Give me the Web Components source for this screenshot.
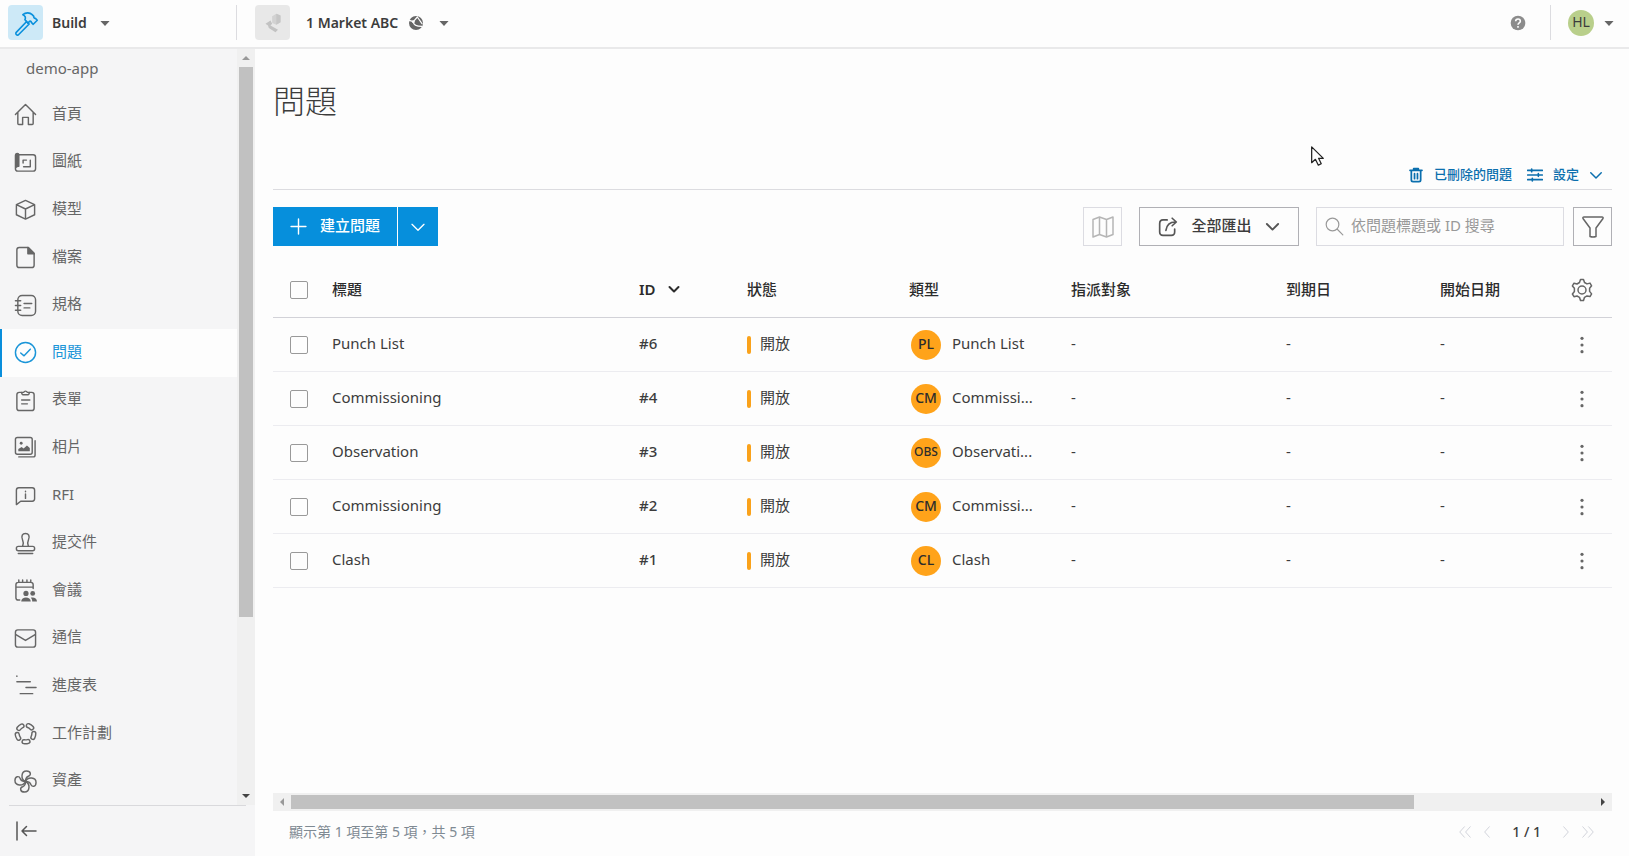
<!DOCTYPE html>
<html lang="zh-Hant">
<head>
<meta charset="utf-8">
<title>問題</title>
<style>
  html, body { height: 100%; }
  body {
    margin: 0;
    background: #fdfdfd;
    color: #3c3c3c;
    font-family: "Noto Sans", "Noto Sans CJK TC", sans-serif;
    font-size: 15px;
    line-height: 20px;
  }
</style>
</head>
<body>
<build-app></build-app>

<script>
const icons = {
  hammer: `<path d="M3 20.600 12.600 10.600l2.300 2.300L5.300 22.600a1.500 1.500 0 0 1-2.300-2z"/><path d="M12.400 10.500 11 9c1-1.900.4-3.700-1.900-4.700C11.800 2 15.600 2.200 17.700 4.300l1.500 1.600c-.2 1 .3 1.900 1.500 1.800l1.700 1.800-3.700 3.700-1.800-1.700c.1-1-.6-1.500-1.400-1.200l-1.900 1.900"/>`,
  caret: `<path d="M6.500 9.500h11L12 15.500z" fill="currentColor" stroke="none"/>`,
  project: `<path d="m11 4 5-3 5 2v8l-5 3-5-2z" fill="#d2d2d2" stroke="none"/><path d="m16 1 5 2v8l-5 3z" fill="#c6c6c6" stroke="none"/><path d="m3 13 6-4 2 4-2 2 9 5-3 3-8-5-1-3z" fill="#c2c2c2" stroke="none"/>`,
  globe: `<circle cx="12" cy="12" r="10.500" fill="currentColor" stroke="none"/><path d="m2 8 6 2 6-7M8 10c0 4 4 7 13 7M14 3l7 10" stroke="#fdfdfd" stroke-width="1.800"/><circle cx="8" cy="10" r="2.200" fill="#fdfdfd" stroke="none"/>`,
  help: `<circle cx="12" cy="12" r="11" fill="currentColor" stroke="none"/><path d="M8.500 9.500c0-4.800 7-4.500 7-.3 0 2.500-3.500 2.500-3.500 5.300M12 16.500v2.500" stroke="#fdfdfd" stroke-width="2.400" stroke-linecap="butt"/>`,
  home: `<path d="M1.500 12 12 1.500 22.500 12M4 10v11.500q0 1 1 1h4v-7.500h6v7.500h4q1 0 1-1V10"/>`,
  sheets: `<path d="M5 4h15q2.500 0 2.500 2.500v12q0 2.500-2.500 2.500H4q-2.500 0-2.500-2.500V5q0-2.500 2-2.500Q5 2.500 5 4v12q-2.500-.5-3.500 2"/><path d="M2 4h2.500v12H2z" fill="currentColor"/><path d="M9.500 12.500V9.500h3.500M17 9.500v7h-7"/>`,
  cube: `<path d="m12 2.500 9.500 4.500v10.500L12 22l-9.500-4.500V7zM2.500 7 12 11.500 21.500 7M12 11.500V22"/>`,
  file: `<path d="M5.500 1.500h9.500l6 6v12.500q0 2.500-2.500 2.500h-13Q3 22.500 3 20V4q0-2.500 2.500-2.500z"/><path d="M14.500 1.500 21 8h-6.500z" fill="currentColor"/>`,
  specs: `<rect x="4" y="1.500" width="18.500" height="21" rx="4.500"/><path d="M1.500 7H7M1.500 12H7M1.500 17H7M10.500 10h8M10.500 14.500h6"/>`,
  issue: `<circle cx="12" cy="12" r="10.500"/><path d="m7 12.500 3.500 3L17 8.500"/>`,
  form: `<path d="M8 3.500H5.500Q3 3.500 3 6v14q0 2.500 2.500 2.500h13Q21 22.500 21 20V6q0-2.500-2.500-2.500H16"/><path d="M8 3.500q0 2.500 1.500 2.500h5Q16 6 16 3.500h-2.200a1.900 1.900 0 0 0-3.600 0zM8 11.500h8.500M8 15.500h6"/>`,
  photo: `<rect x="1.500" y="1.500" width="17.500" height="17.500" rx="2"/><path d="M5 21.800h15q2 0 2-2V5"/><path d="M4.500 16v-2.500l3.500-2 2 1.500 3.500-3 3 2.500V16z" fill="currentColor" stroke="none"/><circle cx="7.500" cy="7.500" r="1.500" fill="currentColor" stroke="none"/>`,
  rfi: `<path d="M5 4h14q2.500 0 2.500 2.500v9q0 2.500-2.500 2.500H7l-4.500 3.500v-15Q2.500 4 5 4z"/><path d="M12 10.500v4.500M12 7.500v.5"/>`,
  stamp: `<path d="M9 15c1.500-3.500 1-4.500 0-6.500C7 4 9 1.500 12 1.500s5 2.500 3 7c-1 2-1.500 3 0 6.500"/><rect x="2.500" y="15" width="19" height="4.500" rx="2"/><path d="M4.500 22.500h15"/>`,
  meeting: `<path d="M6 22H4.500Q2 22 2 19.500V6q0-2.500 2.500-2.500h13Q20 3.500 20 6v4M2 8.500h18M5 1v2.500M9 1v2.500M13.500 1v2.500M17.500 1v2.500"/><g fill="currentColor" stroke="none"><circle cx="12.500" cy="15" r="2.700"/><circle cx="19.500" cy="15" r="2.500"/><path d="M7.500 23.500c0-5.500 10-5.500 10 0zM19 23.500c0-2-.5-3-1.500-4 3-1 6.500.5 6.500 4z"/></g>`,
  mail: `<rect x="1.500" y="3" width="21" height="18" rx="2.500"/><path d="m2 8 10 6 10-6"/>`,
  schedule: `<path d="M3 8h14M12.500 14H23M6.500 20.500h13M3 2v.500"/>`,
  plan: `<circle cx="12" cy="12" r="8.700" stroke-width="5.600" stroke-dasharray="4.200 6.730"/><circle cx="12" cy="12" r="8.700" stroke="#f5f5f6" stroke-width="2.600" stroke-dasharray="4.200 6.730"/>`,
  fan: [0, 90, 180, 270].map((turn) => `<path transform="rotate(${turn} 12 12)" d="M12 12C6.500 9.500 7.500 1 13 1c5 0 5 4.500 2 5.500-2.500 1-3 2.500-3 5.500"/>`).join(""),
  collapse: `<path d="M3 3v18M8 12h14M12.500 7.500 8 12l4.500 4.500"/>`,
  trash: `<path d="M3 5h18M8.500 5V2.500h7V5" stroke-width="2.600"/><path d="M5 6v13.500Q5 22 7.500 22h9q2.500 0 2.500-2.500V6M9.800 10v7.500M14.200 10v7.500" stroke-width="2.600"/>`,
  sliders: `<path d="M1 5h22M1 12h22M1 19h22M7 3v4M17 10v4M8 17v4" stroke-width="2.500"/>`,
  chevron: `<path d="m3 8 9 9 9-9"/>`,
  plus: `<path d="M12 1.500v21M1.500 12h21"/>`,
  map: `<path d="m2 4.500 6.500-2.500 7 2.500 6.500-2.500v17.500L15.500 22l-7-2.500L2 22zM8.500 2v17.500M15.500 4.500V22"/>`,
  share: `<path d="M11 3.500H6Q2 3.500 2 8v10q0 4 4 4h10q4 0 4-4v-3.500M17 1.500 22 6l-5 4.500M22 6c-7.500-.5-11.500 3-12.500 10"/>`,
  search: `<circle cx="9.500" cy="9.500" r="8"/><path d="m15.500 15.500 7 7"/>`,
  filter: `<path d="M2 3.500Q1.500 2 3 2h18q1.500 0 1 1.500L15 13v8.500q-3 1-6 0V13z"/>`,
  gear: `<path d="M9.500 4.500 10.500 1.500h3l1 3 2.500 1.400 3-.8 1.600 2.700-2 2.400v3.200l2 2.500-1.600 2.700-3-.7-2.500 1.400-1 3.200h-3l-1-3.200L7 18l-3 .7-1.600-2.700 2-2.500v-3.200l-2-2.400L4 5.200l3 .8z"/><circle cx="12" cy="12" r="4"/>`,
  dots: `<g fill="currentColor" stroke="none"><circle cx="12" cy="4" r="1.900"/><circle cx="12" cy="12" r="1.900"/><circle cx="12" cy="20" r="1.900"/></g>`,
  left: `<path d="m16 3-8 9 8 9"/>`,
  right: `<path d="m8 3 8 9-8 9"/>`,
  first: `<path d="m11 3-8 9 8 9M21 3l-8 9 8 9"/>`,
  last: `<path d="m3 3 8 9-8 9M13 3l8 9-8 9"/>`,
  arrow: `<path d="M2 1v19l4.500-4 3.500 7 3.500-1.700-3.200-6.500H16z" fill="#fdfdfd" stroke="#222"/>`,
};

// small helper: attach an open root and fill it from a template
function render(host, html) {
  const template = document.createElement("template");
  template.innerHTML = html;
  host.attachShadow({ mode: "open" }).appendChild(template.content.cloneNode(true));
}

const reset = `
  *, *::before { box-sizing: border-box; }
  button, input { font: inherit; color: inherit; margin: 0; }
  button { background: none; border: 0; padding: 0; display: flex; align-items: center; }
  a { color: inherit; text-decoration: none; }
`;

// <ui-icon name="" size="" weight="">
class UiIcon extends HTMLElement {
  connectedCallback() {
    if (this.shadowRoot) return;
    const size = this.getAttribute("size") || 24;
    const weight = this.getAttribute("weight") || 1.5;
    render(this, `
      <style>
        :host { display: block; flex: none; width: ${size}px; height: ${size}px; }
        svg { display: block; width: 100%; height: 100%; }
      </style>
      <svg viewBox="0 0 24 24" fill="none" stroke="currentColor" stroke-width="${weight}"
        stroke-linecap="round" stroke-linejoin="round" aria-hidden="true">${icons[this.getAttribute("name")]}</svg>`);
  }
}

class AppHeader extends HTMLElement {
  constructor() {
    super();
    render(this, `
      <style>
        ${reset}
        :host {
          display: flex;
          align-items: center;
          height: 49px;
          box-sizing: border-box;
          padding: 0 10px 2px 8px;
          border-bottom: 2px solid #e9e9ea;
          color: #3c3c3c;
        }
        button { gap: 8px; font-weight: 600; font-size: 14px; }
        ui-icon { color: #666; }
        .product { width: 228px; }
        .tile {
          display: flex;
          align-items: center;
          justify-content: center;
          width: 35px;
          height: 35px;
          margin-right: 1px;
          border-radius: 4px;
          background: #cde9f7;
        }
        .tile ui-icon { color: #0a90dc; }
        .gray { background: #e8e8e8; margin-right: 6px; }
        .rule { width: 1px; height: 35px; background: #dcdce0; }
        .project { margin-left: 18px; gap: 10px; }
        .help { margin-left: auto; margin-right: 24px; }
        .help ui-icon { color: #8c8c8c; }
        .user { margin-left: 17px; gap: 5px; font-weight: 400; }
        .avatar {
          width: 26px;
          height: 26px;
          line-height: 24px;
          border-radius: 50%;
          background: #b9cf8b;
          text-align: center;
        }
      </style>
      <button class="product">
        <span class="tile"><ui-icon name="hammer" size="26"></ui-icon></span>Build<ui-icon name="caret" size="20"></ui-icon>
      </button>
      <span class="rule"></span>
      <button class="project">
        <span class="tile gray"><ui-icon name="project" size="20"></ui-icon></span>1 Market ABC
        <ui-icon name="globe" size="16"></ui-icon><ui-icon name="caret" size="20"></ui-icon>
      </button>
      <button class="help" aria-label="說明"><ui-icon name="help" size="16"></ui-icon></button>
      <span class="rule"></span>
      <button class="user"><span class="avatar">HL</span><ui-icon name="caret" size="20"></ui-icon></button>`);
  }
}

class NavItem extends HTMLElement {
  connectedCallback() {
    if (this.shadowRoot) return;
    render(this, `
      <style>
        ${reset}
        :host { display: flex; flex: 1; color: #666; }
        a {
          display: flex;
          align-items: center;
          gap: 15px;
          flex: 1;
          padding-left: 12px;
          border-left: 2px solid transparent;
        }
        span { padding-bottom: 4px; }
        :host([active]) a { background: #fdfdfd; border-color: #0a8fdc; color: #1a95d8; }
      </style>
      <a href="#"><ui-icon name="${this.getAttribute("icon")}" size="23"></ui-icon><span><slot></slot></span></a>`);
  }
}

// Scroll rail: --thumb and --rest are the proportions of its two parts
class ScrollRail extends HTMLElement {
  constructor() {
    super();
    render(this, `
      <style>
        :host { display: flex; background: #f0f0f0; }
        span { display: flex; align-items: center; justify-content: center; flex: none; width: 18px; height: 18px; }
        svg { width: 10px; height: 10px; fill: #999; }
        .end svg { fill: #444; }
        .thumb { flex: var(--thumb); background: #c1c1c1; margin: 2px 0; }
        .rest { flex: var(--rest); }
        :host([vertical]) { flex-direction: column; }
        :host([vertical]) .thumb { margin: 0 2px; }
        :host([vertical]) svg { transform: rotate(90deg); }
      </style>
      <span><svg viewBox="0 0 10 10"><path d="M7 1v8L3 5z"/></svg></span>
      <div class="thumb"></div><div class="rest"></div>
      <span class="end"><svg viewBox="0 0 10 10"><path d="M3 1v8l4-4z"/></svg></span>`);
  }
}

class SideNav extends HTMLElement {
  constructor() {
    super();
    render(this, `
      <style>
        ${reset}
        :host { display: flex; flex-direction: column; width: 255px; flex: none; background: #f5f5f6; }
        .scroller { display: flex; flex: 1; min-height: 0; }
        nav { display: flex; flex-direction: column; flex: 1; }
        .app { height: 42px; padding: 9px 26px; box-sizing: border-box; color: #666; }
        .foot { height: 51px; margin: 0 9px; padding-left: 5px; border-top: 1px solid #d9d9dc; display: flex; color: #555; }
      </style>
      <div class="scroller">
        <nav>
          <div class="app">demo-app</div>
          <nav-item icon="home">首頁</nav-item>
          <nav-item icon="sheets">圖紙</nav-item>
          <nav-item icon="cube">模型</nav-item>
          <nav-item icon="file">檔案</nav-item>
          <nav-item icon="specs">規格</nav-item>
          <nav-item icon="issue" active>問題</nav-item>
          <nav-item icon="form">表單</nav-item>
          <nav-item icon="photo">相片</nav-item>
          <nav-item icon="rfi">RFI</nav-item>
          <nav-item icon="stamp">提交件</nav-item>
          <nav-item icon="meeting">會議</nav-item>
          <nav-item icon="mail">通信</nav-item>
          <nav-item icon="schedule">進度表</nav-item>
          <nav-item icon="plan">工作計劃</nav-item>
          <nav-item icon="fan">資產</nav-item>
        </nav>
        <scroll-rail vertical style="--thumb: 55; --rest: 17"></scroll-rail>
      </div>
      <div class="foot"><button aria-label="收合"><ui-icon name="collapse" size="24"></ui-icon></button></div>`);
  }
}

class IssueToolbar extends HTMLElement {
  constructor() {
    super();
    render(this, `
      <style>
        ${reset}
        :host { display: flex; height: 39px; margin-top: 17px; }
        span { padding-bottom: 3px; }
        .create { background: #068fdc; color: #fff; font-weight: 500; padding: 0 17px; gap: 13px; }
        .more { background: #068fdc; color: #fff; padding: 0 12px; margin-left: 1px; }
        .box { border: 1px solid #b0b0b5; justify-content: center; color: #666; width: 39px; }
        .map { margin-left: auto; border-color: #dcdce2; color: #b5b5b5; }
        .export { width: 160px; margin: 0 17px; gap: 13px; color: #3c3c3c; font-weight: 500; }
        .export ui-icon { color: #555; }
        label {
          display: flex;
          align-items: center;
          gap: 7px;
          width: 248px;
          margin-right: 9px;
          padding: 0 8px;
          border: 1px solid #dcdce2;
          color: #999;
        }
        input { flex: 1; min-width: 0; border: 0; padding: 0 0 3px; background: none; outline: 0; }
        input::placeholder { color: #999; opacity: 1; }
      </style>
      <button class="create"><ui-icon name="plus" size="17" weight="2"></ui-icon><span>建立問題</span></button>
      <button class="more" aria-label="更多"><ui-icon name="chevron" size="16" weight="2"></ui-icon></button>
      <button class="box map" aria-label="地圖"><ui-icon name="map"></ui-icon></button>
      <button class="box export"><ui-icon name="share" size="20" weight="2"></ui-icon><span>全部匯出</span><ui-icon name="chevron" size="15" weight="3"></ui-icon></button>
      <label><ui-icon name="search" size="19"></ui-icon><input type="text" aria-label="搜尋" placeholder="依問題標題或 ID 搜尋"></label>
      <button class="box" aria-label="篩選"><ui-icon name="filter"></ui-icon></button>`);
  }
}

const issues = [
  { title: "Punch List", id: 6, code: "PL" },
  { title: "Commissioning", id: 4, code: "CM" },
  { title: "Observation", id: 3, code: "OBS" },
  { title: "Commissioning", id: 2, code: "CM" },
  { title: "Clash", id: 1, code: "CL" },
];

const shorten = (name) => {
  if (name.length <= 10) return name;
  return name.slice(0, name.startsWith("Obs") ? 9 : 8) + "...";
};

class IssueTable extends HTMLElement {
  constructor() {
    super();
    const rows = issues.map((issue) => `
      <tr>
        <td class="control pick"><input type="checkbox" aria-label="${issue.title} #${issue.id}"></td>
        <td>${issue.title}</td>
        <td class="number">#${issue.id}</td>
        <td class="control"><div class="status"><span class="text">開放</span></div></td>
        <td class="control"><div class="type"><span class="badge ${issue.code.length > 2 ? "long" : ""}">${issue.code}</span><span class="text">${shorten(issue.title)}</span></div></td>
        <td>-</td>
        <td>-</td>
        <td>-</td>
        <td class="control"><button aria-label="動作"><ui-icon name="dots" size="20"></ui-icon></button></td>
      </tr>`).join("");
    render(this, `
      <style>
        ${reset}
        :host { display: block; margin-top: 18px; }
        table { width: 100%; table-layout: fixed; border-collapse: separate; border-spacing: 0; }
        th, td { height: 54px; padding: 0 0 3px; text-align: left; border-bottom: 1px solid #ececf0; white-space: nowrap; }
        th { font-weight: 500; color: #2c2c2c; border-color: #d2d2d8; padding-bottom: 4px; }
        .text { padding-bottom: 3px; }
        .control { padding-bottom: 0; }
        .pick { padding-left: 17px; }
        th.control { padding-bottom: 1px; }
        .number { font-weight: 500; }
        input {
          appearance: none;
          display: block;
          width: 18px;
          height: 18px;
          border: 1px solid #999;
          border-radius: 2px;
          background: #fdfdfd;
        }
        button { color: #666; margin-left: 2px; }
        th button { margin-left: 0; }
        .sort { margin: 0; gap: 12px; color: inherit; font-weight: 600; }
        .status { display: flex; align-items: center; gap: 9px; }
        .status::before { content: ""; width: 4px; height: 18px; border-radius: 2px; background: #faa21b; }
        .type { display: flex; align-items: center; gap: 11px; padding-left: 2px; }
        .badge {
          flex: none;
          width: 30px;
          height: 30px;
          line-height: 28px;
          border-radius: 50%;
          background: #ffa31a;
          color: #2c2c2c;
          text-align: center;
          font-size: 14px;
          font-weight: 500;
        }
        .long { font-size: 12px; }
      </style>
      <table>
        <colgroup>
          <col style="width: 59px"><col><col style="width: 108px"><col style="width: 162px"><col style="width: 162px">
          <col style="width: 215px"><col style="width: 154px"><col style="width: 130px"><col style="width: 42px">
        </colgroup>
        <thead>
          <tr>
            <th class="control pick"><input type="checkbox" aria-label="全選"></th>
            <th>標題</th>
            <th><button class="sort">ID<ui-icon name="chevron" size="12" weight="4"></ui-icon></button></th>
            <th>狀態</th>
            <th>類型</th>
            <th>指派對象</th>
            <th>到期日</th>
            <th>開始日期</th>
            <th class="control"><button aria-label="設定欄"><ui-icon name="gear"></ui-icon></button></th>
          </tr>
        </thead>
        <tbody>${rows}</tbody>
      </table>`);
  }
}

class IssuePager extends HTMLElement {
  constructor() {
    super();
    render(this, `
      <style>
        ${reset}
        :host {
          display: flex;
          align-items: center;
          justify-content: space-between;
          height: 45px;
          padding: 0 17px 4px 16px;
          font-size: 14px;
          color: #7f8a93;
          box-sizing: border-box;
        }
        div { display: flex; align-items: center; gap: 8px; }
        button { color: #ccced6; }
        b { font-weight: 500; color: #3c3c3c; padding: 0 10px; }
      </style>
      <span>顯示第 1 項至第 5 項，共 5 項</span>
      <div>
        <button aria-label="第一頁"><ui-icon name="first" size="14"></ui-icon></button>
        <button aria-label="上一頁"><ui-icon name="left" size="14"></ui-icon></button>
        <b>1 / 1</b>
        <button aria-label="下一頁"><ui-icon name="right" size="14"></ui-icon></button>
        <button aria-label="最後一頁"><ui-icon name="last" size="14"></ui-icon></button>
      </div>`);
  }
}

class IssuePage extends HTMLElement {
  constructor() {
    super();
    render(this, `
      <style>
        ${reset}
        :host { display: flex; flex-direction: column; flex: 1; min-width: 0; padding: 28px 17px 0 18px; }
        h1 { margin: 0; font-size: 32px; line-height: 48px; font-weight: 300; }
        .links {
          display: flex;
          justify-content: flex-end;
          align-items: flex-end;
          height: 65px;
          gap: 15px;
          padding-right: 9px;
          border-bottom: 1px solid #dcdce0;
          font-size: 13px;
          font-weight: 500;
          color: #0b6fae;
        }
        .links button { height: 28px; gap: 10px; }
        .links span { padding-bottom: 2px; }
        scroll-rail { height: 18px; margin-top: auto; }
      </style>
      <h1>問題</h1>
      <div class="links">
        <button><ui-icon name="trash" size="16"></ui-icon><span>已刪除的問題</span></button>
        <button><ui-icon name="sliders" size="16"></ui-icon><span>設定</span><ui-icon name="chevron" size="14" weight="2.500"></ui-icon></button>
      </div>
      <issue-toolbar></issue-toolbar>
      <issue-table></issue-table>
      <scroll-rail style="--thumb: 112; --rest: 18"></scroll-rail>
      <issue-pager></issue-pager>`);
  }
}

class BuildApp extends HTMLElement {
  constructor() {
    super();
    render(this, `
      <style>
        :host { display: flex; flex-direction: column; min-height: 100vh; }
        main { display: flex; flex: 1; }
        /* mouse pointer lying over the page */
        .pointer { position: absolute; left: 1310px; top: 146px; }
      </style>
      <app-header></app-header>
      <main><side-nav></side-nav><issue-page></issue-page></main>
      <ui-icon class="pointer" name="arrow" size="20"></ui-icon>`);
  }
}

customElements.define("ui-icon", UiIcon);
customElements.define("scroll-rail", ScrollRail);
customElements.define("app-header", AppHeader);
customElements.define("nav-item", NavItem);
customElements.define("side-nav", SideNav);
customElements.define("issue-toolbar", IssueToolbar);
customElements.define("issue-table", IssueTable);
customElements.define("issue-pager", IssuePager);
customElements.define("issue-page", IssuePage);
customElements.define("build-app", BuildApp);
</script>
</body>
</html>
